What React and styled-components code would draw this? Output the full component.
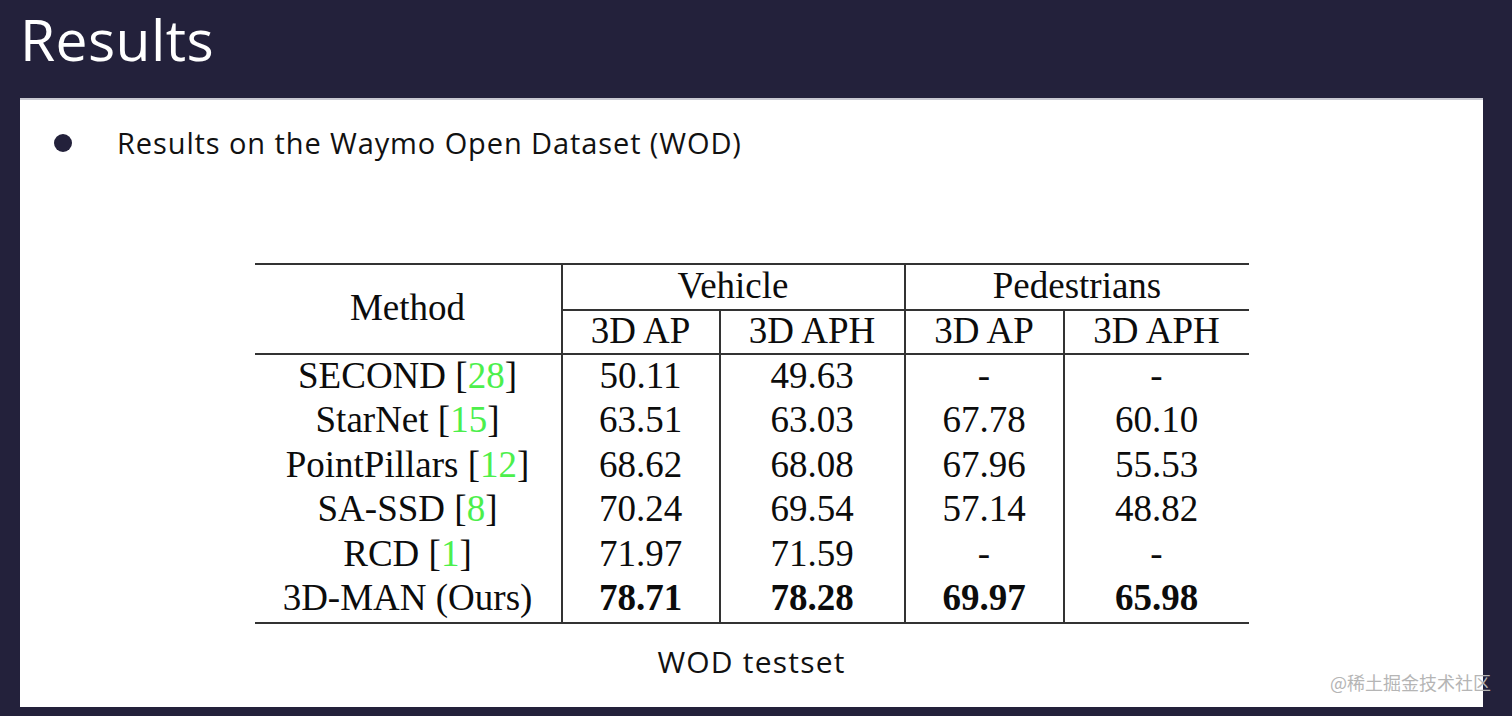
import React from 'react';
import styled, { createGlobalStyle } from 'styled-components';

const Global = createGlobalStyle`
    html, body {
        margin: 0;
        padding: 0;
        background: #23213b;
    }
`

const Slide = styled.div`
    width: 1512px;
    height: 716px;
    background: #23213b;
    display: flex;
    flex-direction: column;
    box-sizing: border-box;
    padding: 0 29px 9px 20px;
`

const Title = styled.h1`
    margin: 0;
    height: 98px;
    box-sizing: border-box;
    padding-top: 3px;
    color: #fff;
    font-family: "Open Sans", sans-serif;
    font-weight: 500;
    font-size: 57px;
    line-height: 72px;
    letter-spacing: 0.4px;
`

const Panel = styled.div`
    flex: 1;
    background: #fff;
    border-top: 2px solid #c9c9d2;
    display: flex;
    flex-direction: column;
    align-items: center;
    position: relative;
`

const Bullet = styled.div`
    align-self: stretch;
    display: flex;
    align-items: center;
    gap: 45px;
    padding: 23px 0 0 34px;
    font-family: "Open Sans", sans-serif;
    font-size: 29px;
    color: #111;
    letter-spacing: 0.9px;
`

const Dot = styled.span`
    width: 18px;
    height: 18px;
    border-radius: 50%;
    background: #23213b;
    flex: none;
`

const Table = styled.table`
    margin-top: 101px;
    border-collapse: collapse;
    font-family: "Liberation Serif", "Times New Roman", serif;
    font-size: 37px;
    color: #0c0c0c;
    border-top: 2px solid #333;
    border-bottom: 2px solid #333;
`

const Th = styled.th`
    font-weight: normal;
    height: ${p => p.$h || 39}px;
    padding: 0 0 3px;
    width: ${p => p.$w ? p.$w + 'px' : 'auto'};
    border-left: ${p => p.$left ? '2px solid #333' : 'none'};
    border-bottom: ${p => p.$bottom ? '2px solid #333' : 'none'};
    text-align: center;
    vertical-align: middle;
    line-height: 38px;
`

const Td = styled.td`
    height: 41.5px;
    padding: 0 0 3px;
    text-align: center;
    vertical-align: middle;
    line-height: 38px;
    font-weight: ${p => p.$bold ? 'bold' : 'normal'};
    border-left: ${p => p.$left ? '2px solid #333' : 'none'};
`

const Ref = styled.span`
    color: #4cef4c;
`

const Caption = styled.div`
    margin-top: 17px;
    font-family: "Open Sans", sans-serif;
    font-size: 30px;
    color: #111;
    letter-spacing: 1.2px;
`

const Watermark = styled.div`
    position: absolute;
    right: -8px;
    bottom: 12px;
    font-family: "Noto Sans CJK SC", sans-serif;
    font-size: 18px;
    color: #b5b5b5;
`

const rows = [
    ['SECOND', '28', ['50.11', '49.63', '-', '-']],
    ['StarNet', '15', ['63.51', '63.03', '67.78', '60.10']],
    ['PointPillars', '12', ['68.62', '68.08', '67.96', '55.53']],
    ['SA-SSD', '8', ['70.24', '69.54', '57.14', '48.82']],
    ['RCD', '1', ['71.97', '71.59', '-', '-']],
]

const ours = ['78.71', '78.28', '69.97', '65.98']

const App = () => {
    return <Slide>
        <Global />
        <Title>Results</Title>
        <Panel>
            <Bullet>
                <Dot />
                <span>Results on the Waymo Open Dataset (WOD)</span>
            </Bullet>
            <Table>
                <thead>
                    <tr>
                        <Th rowSpan={2} $w={306} $bottom>Method</Th>
                        <Th colSpan={2} $left $bottom $h={41}>Vehicle</Th>
                        <Th colSpan={2} $left $bottom $h={41}>Pedestrians</Th>
                    </tr>
                    <tr>
                        <Th $w={156} $left $bottom>3D AP</Th>
                        <Th $w={183} $left $bottom>3D APH</Th>
                        <Th $w={157} $left $bottom>3D AP</Th>
                        <Th $w={184} $left $bottom>3D APH</Th>
                    </tr>
                </thead>
                <tbody>
                    {rows.map(([name, ref, vals]) => (
                        <tr key={name}>
                            <Td>{name} [<Ref>{ref}</Ref>]</Td>
                            {vals.map((v, i) => <Td key={i} $left>{v}</Td>)}
                        </tr>
                    ))}
                    <tr>
                        <Td>3D-MAN (Ours)</Td>
                        {ours.map((v, i) => <Td key={i} $left $bold>{v}</Td>)}
                    </tr>
                </tbody>
            </Table>
            <Caption>WOD testset</Caption>
            <Watermark>@稀土掘金技术社区</Watermark>
        </Panel>
    </Slide>
}

export default App;
